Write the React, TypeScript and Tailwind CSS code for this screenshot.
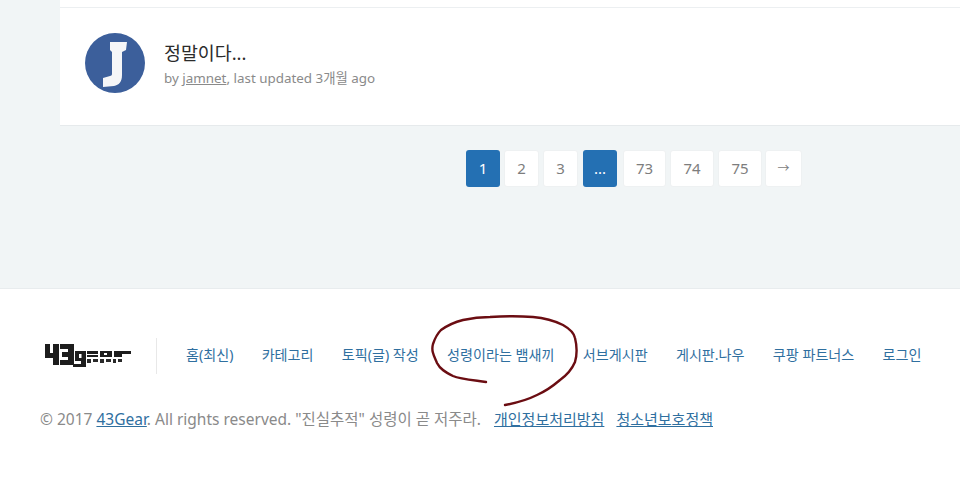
const font = '[font-family:"Noto_Sans","Noto_Sans_CJK_KR",sans-serif]';

const pages = [
  { label: '1', active: true, w: 'w-[34px]' },
  { label: '2', active: false, w: 'w-[35px]' },
  { label: '3', active: false, w: 'w-[35px]' },
  { label: '...', active: true, w: 'w-[34px] ml-px' },
  { label: '73', active: false, w: 'w-[43px] ml-[2px]' },
  { label: '74', active: false, w: 'w-[44px]' },
  { label: '75', active: false, w: 'w-[44px]' },
  { label: '→', active: false, w: 'w-[37px] -ml-px' },
];

const footerLinks = ['홈(최신)', '카테고리', '토픽(글) 작성', '성령이라는 뱀새끼', '서브게시판', '게시판.나우', '쿠팡 파트너스', '로그인'];

function Logo() {
  return (
    <svg width="87" height="24" viewBox="0 0 87 24" className="block shrink-0">
      <g fill="#1d1d1d">
        <path d="M1 0h5v9h3V0h6v21H9v-7H1z" />
        <path d="M16 0h14v21H16v-5h8v-3h-6V8h6V5h-8z" />
        <path d="M31 7h11v16H29v-3h8v-3h-6zM43 7h11v3H43zM43 11h11v2H43zM56 7h12v6H56zM70 7h17v3H78v3h-8z" />
      </g>
      <g fill="#ffffff">
        <rect x="35" y="10" width="2.5" height="4" />
        <rect x="60" y="9" width="3" height="2" />
      </g>
      <g fill="#2a2a2a">
        <rect x="43" y="15" width="4" height="4" />
        <rect x="49" y="15" width="5" height="3" />
        <rect x="56" y="15" width="4" height="4" />
        <rect x="62" y="15" width="5" height="3" />
        <rect x="69" y="15" width="3" height="4" />
        <rect x="74" y="15" width="4" height="3" />
      </g>
    </svg>
  );
}

function Avatar() {
  return (
    <div className="h-[60px] w-[60px] shrink-0 rounded-full bg-[#3c5f9b] overflow-hidden">
      <svg width="60" height="60" viewBox="0 0 60 60">
        <path d="M25 9h17l-1 8-4 2v23c0 7-3 10-8 11l-11 1v-9l7-2c1 0 2-1 2-2V19l-2-2z" fill="#f5f6f8" />
      </svg>
    </div>
  );
}

export default function App() {
  return (
    <div className={`relative h-[488px] w-[960px] overflow-hidden bg-white ${font}`}>
      <div className="h-[289px] bg-[#f1f5f6] border-b border-[#e8ecee]">
        <div className="ml-[60px] h-[126px] bg-white border-b border-[#e6eaec]">
          <div className="h-2 border-b border-[#eceff1]" />
          <div className="flex items-center gap-[19px] pl-[25px] pt-[25px]">
            <Avatar />
            <div>
              <div className="text-[18.4px] leading-[26px] text-[#2b2b2b]">정말이다...</div>
              <div className="mt-[3px] text-[13.4px] leading-[18px] text-[#8a8a8a]">
                by <a className="underline">jamnet</a>, last updated 3개월 ago
              </div>
            </div>
          </div>
        </div>
        <div className="mt-[24px] flex gap-[4px] pl-[466px]">
          {pages.map((p, i) => (
            <div
              key={i}
              className={`flex h-[37px] items-center justify-center rounded-[3px] ${p.label === '→' ? 'text-[12px]' : 'text-[15px]'} ${p.w} ${
                p.active ? 'bg-[#2470b3] text-white' : 'bg-white text-[#7d7d7d] border border-[#eef1f2]'
              }`}
            >
              {p.label}
            </div>
          ))}
        </div>
      </div>

      <div className="flex h-[85px] items-center pl-[44px] pt-[49px]">
        <Logo />
        <div className="ml-[25px] h-[36px] w-px bg-[#e8e8e8]" />
        <div className="mb-[3px] ml-[29px] flex gap-[28.3px]">
          {footerLinks.map((label) => (
            <a key={label} className="whitespace-nowrap text-[14.1px] leading-[20px] text-[#2f6f9f]">
              {label}
            </a>
          ))}
        </div>
      </div>

      <div className="mt-[35px] pl-[40px] text-[15.5px] leading-[20px] text-[#8a8a8a]">
        © 2017 <a className="text-[#2f6f9f] underline">43Gear</a>. All rights reserved. "진실추적" 성령이 곧 저주라.
        <a className="ml-[13px] text-[15px] text-[#2f6f9f] underline">개인정보처리방침</a>
        <a className="ml-[12px] text-[15px] text-[#2f6f9f] underline">청소년보호정책</a>
      </div>

      {/* hand-drawn circle scribbled over the footer link */}
      <svg className="absolute left-0 top-0 pointer-events-none" width="960" height="488" viewBox="0 0 960 488">
        <path
          d="M486 382C472 380 460 379 453 376C445 372 440 369 437 363C434 356 431 351 433 344C435 338 437 334 441 330C448 325 455 322 463 320C472 318 480 317 490 317C505 316 520 316 533 317C545 318 555 321 563 325C570 329 574 333 575 338C577 346 577 355 575 362C572 369 567 375 560 380C553 386 546 391 537 395C527 400 516 403 505 405"
          fill="none"
          stroke="#6b0d12"
          strokeWidth="2.4"
          strokeLinecap="round"
        />
      </svg>
    </div>
  );
}
